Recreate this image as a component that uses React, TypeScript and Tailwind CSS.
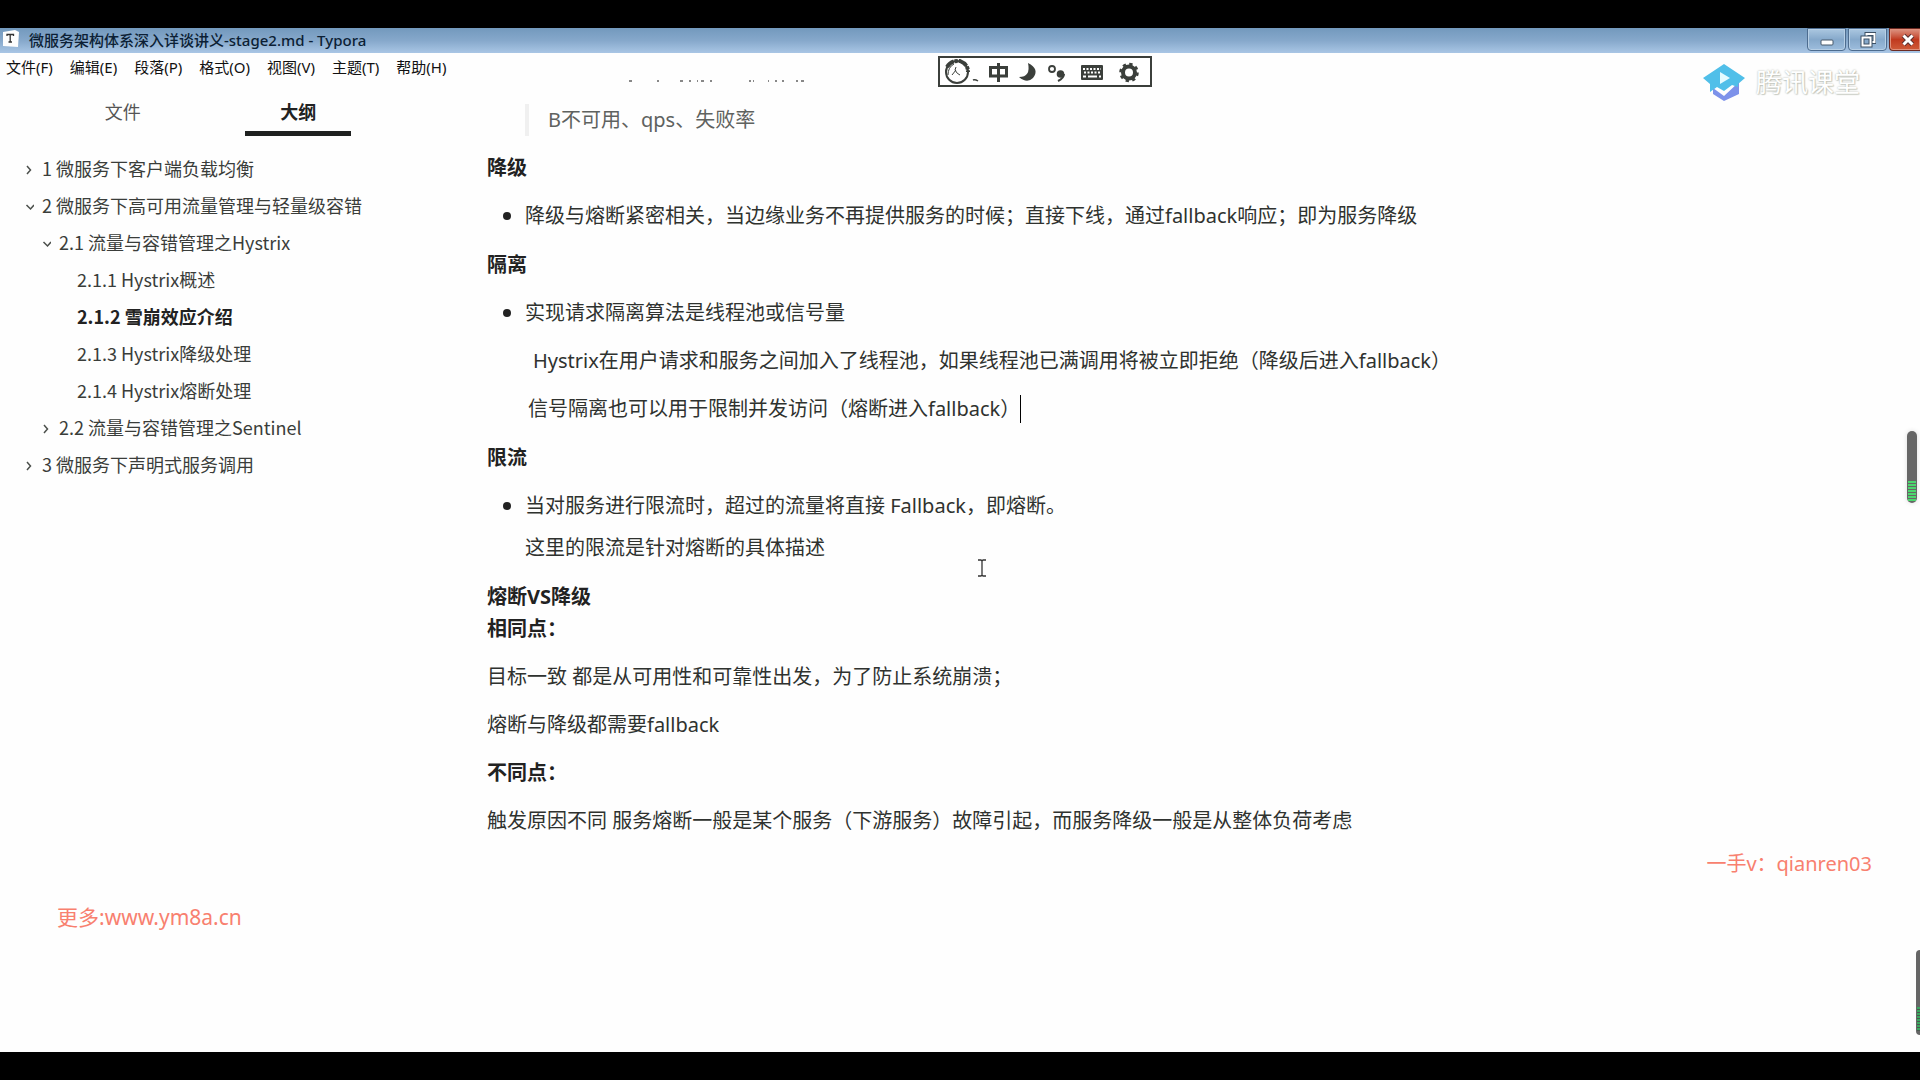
import type { ReactNode } from "react";
import { clsx } from "clsx";

const menus = ["文件(F)", "编辑(E)", "段落(P)", "格式(O)", "视图(V)", "主题(T)", "帮助(H)"];

type OutlineItem = {
  label: string;
  level: 1 | 2 | 3;
  state?: "open" | "closed";
  active?: boolean;
};

const outline: OutlineItem[] = [
  { label: "1 微服务下客户端负载均衡", level: 1, state: "closed" },
  { label: "2 微服务下高可用流量管理与轻量级容错", level: 1, state: "open" },
  { label: "2.1 流量与容错管理之Hystrix", level: 2, state: "open" },
  { label: "2.1.1 Hystrix概述", level: 3 },
  { label: "2.1.2 雪崩效应介绍", level: 3, active: true },
  { label: "2.1.3 Hystrix降级处理", level: 3 },
  { label: "2.1.4 Hystrix熔断处理", level: 3 },
  { label: "2.2 流量与容错管理之Sentinel", level: 2, state: "closed" },
  { label: "3 微服务下声明式服务调用", level: 1, state: "closed" },
];

const indents = { 1: "pl-6", 2: "pl-[41px]", 3: "pl-[59px]" };

function TitleBar() {
  return (
    <header className="flex h-[25px] items-start bg-linear-to-b from-[#7399bd] via-[#86a8cb] to-[#a9c6e5]">
      <svg className="mt-0.5 ml-0.5 h-[17px] w-[17px]" viewBox="0 0 17 17">
        <path d="M1 2 L13 0 L17 2 L16 17 L1 16 Z" fill="#fdfdfd" />
        <path d="M5 6 V4.500 H11.500 V6 M8.200 4.500 V12 M6.500 12 H10" fill="none" stroke="#333" strokeWidth="1.300" />
      </svg>
      <h1 className="ml-2.5 text-[15px] leading-6 font-medium text-[#0c1f35]">微服务架构体系深入详谈讲义-stage2.md - Typora</h1>
      <div className="ml-auto flex gap-0.5">
        <button aria-label="最小化" className="flex h-[23px] w-[39px] items-center justify-center rounded-b-sm border border-[#4d6c8f] bg-linear-to-b from-[#abc7e0] via-[#86a9cb] to-[#9dbddd] shadow-[inset_0_0_0_1px_#b7cfe5]">
          <svg className="h-4 w-4" viewBox="0 0 16 16">
            <rect x="2" y="8" width="12" height="5" rx="1" fill="#fff" stroke="#47586b" />
          </svg>
        </button>
        <button aria-label="还原" className="flex h-[23px] w-[39px] items-center justify-center rounded-b-sm border border-[#4d6c8f] bg-linear-to-b from-[#abc7e0] via-[#86a9cb] to-[#9dbddd] shadow-[inset_0_0_0_1px_#b7cfe5]">
          <svg className="h-4 w-4" viewBox="0 0 16 16" fill="none">
            <rect x="6.500" y="2" width="8" height="8" stroke="#3d5064" strokeWidth="4" />
            <rect x="6.500" y="2" width="8" height="8" stroke="#fff" strokeWidth="2" />
            <rect x="2.500" y="5.500" width="8" height="8" fill="#86a9cb" stroke="#3d5064" strokeWidth="4" />
            <rect x="2.500" y="5.500" width="8" height="8" stroke="#fff" strokeWidth="2" />
          </svg>
        </button>
        <button aria-label="关闭" className="flex h-[23px] w-[31px] items-center justify-center rounded-bl-sm border border-r-0 border-[#6b2a22] bg-linear-to-b from-[#dc9483] via-[#c0391f] to-[#cf5a38] pl-1.5 shadow-[inset_0_0_0_1px_#e0907c]">
          <svg className="h-4 w-4" viewBox="0 0 16 16" fill="none">
            <path d="M3.500 3.500 L12.500 12.500 M12.500 3.500 L3.500 12.500" stroke="#5d3030" strokeWidth="5" />
            <path d="M3.500 3.500 L12.500 12.500 M12.500 3.500 L3.500 12.500" stroke="#fff" strokeWidth="3" />
          </svg>
        </button>
      </div>
    </header>
  );
}

function Chevron({ state }: { state?: "open" | "closed" }) {
  return (
    <svg className="h-3 w-2.5 shrink-0" viewBox="0 0 10 12" fill="none" stroke="#4b4f4b" strokeWidth="1.500">
      {state === "closed" && <path d="M3 3 L6.500 7 L3 11" />}
      {state === "open" && <path d="M2.500 5 L6.500 9 L10 5" />}
    </svg>
  );
}

function Sidebar() {
  return (
    <aside className="w-[421px] shrink-0 font-['Noto_Sans_CJK_SC',sans-serif]">
      <div role="tablist" className="flex justify-evenly text-[18px] leading-7">
        <button role="tab" aria-selected="false" className="w-[106px] border-b-[5px] border-transparent pt-[17px] pb-1.5 text-[#555]">
          文件
        </button>
        <button role="tab" aria-selected="true" className="w-[106px] border-b-[5px] border-[#1f2120] pt-[17px] pb-1.5 font-bold text-[#222]">
          大纲
        </button>
      </div>
      <ul className="pt-[14px] text-[18px] leading-[37px] text-[#3a3d3a]">
        {outline.map((item) => (
          <li key={item.label} className={clsx("flex items-center gap-2", indents[item.level])}>
            <Chevron state={item.state} />
            <a href="#" className={clsx("whitespace-nowrap", item.active && "font-bold text-[#222]")}>
              {item.label}
            </a>
          </li>
        ))}
      </ul>
    </aside>
  );
}

function Bullets({ children }: { children: ReactNode }) {
  return (
    <ul className="mb-[17px] pl-[38px]">
      <li className="relative">
        <span className="absolute top-3 -left-[22px] h-2 w-2 rounded-full bg-[#222]" />
        {children}
      </li>
    </ul>
  );
}

function Heading({ children }: { children: ReactNode }) {
  return <h5 className="mb-4 font-bold text-[#222]">{children}</h5>;
}

function Article() {
  return (
    <article className="min-w-0 grow pr-12 pl-[66px] text-[20px] leading-8 text-[#2f322f]">
      <svg className="mb-[22px] ml-[142px] block h-0.5 w-[180px]" viewBox="0 0 180 2" stroke="#888" strokeWidth="2">
        <path d="M0 1 H3 M28 1 H30 M51 1 H54 M60 1 H62 M68 1 H69 M72 1 H75 M81 1 H83 M120 1 H122 M124 1 H125 M139 1 H140 M146 1 H148 M153 1 H155 M167 1 H169 M172 1 H175" />
      </svg>
      <blockquote className="mb-4 ml-[38px] border-l-4 border-[#f0f0f0] pl-[19px] text-[#5f625f]">B不可用、qps、失败率</blockquote>
      <Heading>降级</Heading>
      <Bullets>
        <p>降级与熔断紧密相关，当边缘业务不再提供服务的时候；直接下线，通过fallback响应；即为服务降级</p>
      </Bullets>
      <Heading>隔离</Heading>
      <Bullets>
        <p>实现请求隔离算法是线程池或信号量</p>
        <p className="mt-4 pl-2">Hystrix在用户请求和服务之间加入了线程池，如果线程池已满调用将被立即拒绝（降级后进入fallback）</p>
        <p className="mt-4 flex items-center pl-[3px]">
          信号隔离也可以用于限制并发访问（熔断进入fallback）
          <span className="h-7 w-px bg-black" />
        </p>
      </Bullets>
      <Heading>限流</Heading>
      <Bullets>
        <p>当对服务进行限流时，超过的流量将直接 Fallback，即熔断。</p>
        <p className="mt-2.5">这里的限流是针对熔断的具体描述</p>
      </Bullets>
      <Heading>
        熔断VS降级
        <br />
        相同点：
      </Heading>
      <p className="mb-4">目标一致 都是从可用性和可靠性出发，为了防止系统崩溃；</p>
      <p className="mb-4">熔断与降级都需要fallback</p>
      <Heading>不同点：</Heading>
      <p>触发原因不同 服务熔断一般是某个服务（下游服务）故障引起，而服务降级一般是从整体负荷考虑</p>
    </article>
  );
}

function ImeToolbar() {
  return (
    <div className="absolute top-[3px] left-[938px] flex h-[31px] w-[214px] items-center border-2 border-[#3b3f3b] bg-white text-[#3b3f3b]">
      <svg className="h-full w-full" viewBox="1 1 210 27" fill="none" stroke="currentColor">
        <circle cx="18" cy="15" r="11" strokeWidth="2" />
        <path d="M8 10 Q12 3 21 4 Q29 7 29 15" strokeWidth="4" strokeDasharray="9 1 3 1" />
        <path d="M9 18 Q9 10 15 7 M13 18 L17 13 M17 10 L16 13 Q18 17 21 18" strokeWidth="1" />
        <path d="M34 23 Q36 22 39 24" strokeWidth="1.500" />
        <path d="M51.500 10.500 H67.500 V19 H51.500 Z M59.500 6 V25" strokeWidth="3" />
        <path d="M89 6 Q101 12 94 21 Q88 27 80 20 Q92 20 89 6 Z" fill="currentColor" stroke="none" />
        <circle cx="113" cy="12" r="3" strokeWidth="1.800" />
        <path d="M125 17 Q125 21 119 24" strokeWidth="2" />
        <circle cx="121.500" cy="17" r="3.800" fill="currentColor" stroke="none" />
        <rect x="142" y="8" width="22" height="15" rx="1" fill="currentColor" stroke="none" />
        <path d="M144 12 H162 M145 15.500 H161" stroke="#fff" strokeWidth="2" strokeDasharray="2 1.500" />
        <path d="M144 19.500 H147 M149 19.500 H158 M160 19.500 H162" stroke="#fff" strokeWidth="2" />
        <circle cx="190" cy="15.500" r="6" strokeWidth="4" />
        <circle cx="190" cy="15.500" r="8.500" strokeWidth="2.500" strokeDasharray="3.300 3.375" />
      </svg>
    </div>
  );
}

function ClassroomLogo() {
  return (
    <div className="absolute top-[9px] right-[60px] flex items-center gap-2.5">
      <svg className="h-10 w-11" viewBox="0 0 44 40">
        <path d="M11 26 L22 34 L37 20 V32 L22 39 L11 32 Z" fill="#7d92ea" />
        <path d="M22 2 L43 16 L36 22 V25 L30 23 L22 29 L15 25 L8 30 V22 L1 16 Z" fill="#50bfe9" />
        <path d="M18 10 V22 L28 16 Z" fill="#e4fbff" />
      </svg>
      <span className="text-[26px] leading-9 text-white [text-shadow:0_0_2px_#a8ada4,1px_1px_1px_#d3d6ce]">腾讯课堂</span>
    </div>
  );
}

export default function App() {
  return (
    <div className="flex min-h-screen flex-col bg-black pt-7 pb-7 font-['Noto_Sans','Noto_Sans_CJK_SC',sans-serif]">
      <TitleBar />
      <div className="relative flex grow flex-col overflow-hidden bg-[#fefefe]">
        <nav className="flex gap-[17px] pt-px pl-1.5 text-[15px] leading-[26px] text-[#111]">
          {menus.map((menu) => (
            <button key={menu}>{menu}</button>
          ))}
        </nav>
        <main className="flex grow">
          <Sidebar />
          <Article />
        </main>

        <ImeToolbar />
        <ClassroomLogo />

        <p className="absolute right-12 bottom-[172px] text-[20px] leading-8 text-[#f8806f]">一手v：qianren03</p>
        <p className="absolute bottom-[119px] left-[57px] text-[21px] leading-8 text-[#f8806f]">更多:www.ym8a.cn</p>

        {/* text cursor */}
        <svg className="absolute top-[506px] left-[977px] h-[18px] w-2.5" viewBox="0 0 10 18" fill="none" stroke="#333">
          <path d="M1 1 H4 L5 2 L6 1 H9 M5 2 V16 M1 17 H4 L5 16 L6 17 H9" strokeWidth="1.300" />
        </svg>

        {/* level meters */}
        <div className="absolute top-[378px] right-[3px] flex h-[72px] w-2.5 items-end overflow-hidden rounded-full bg-[#666] px-px pb-0.5 shadow-[0_0_5px_#ddd]">
          <div className="h-5 w-full bg-[repeating-linear-gradient(#4bd66d_0_2px,#666_2px_3px)]" />
        </div>
        <div className="absolute right-0 bottom-[17px] flex h-[85px] w-1 items-end overflow-hidden rounded-l-full bg-[#666] pb-1 pl-px">
          <div className="h-6 w-full bg-[repeating-linear-gradient(#3aa860_0_2px,#4b5a50_2px_3px)]" />
        </div>
      </div>
    </div>
  );
}
